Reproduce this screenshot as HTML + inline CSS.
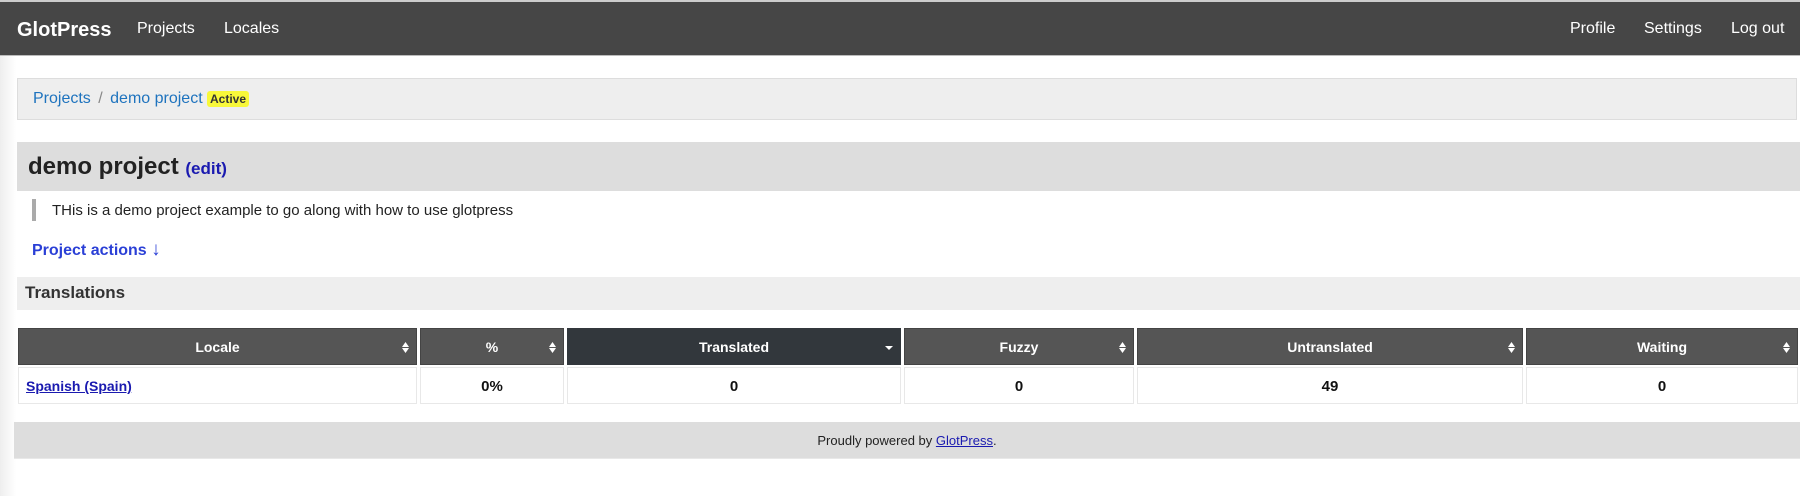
<!DOCTYPE html>
<html><head><meta charset="utf-8"><style>
*{margin:0;padding:0;box-sizing:border-box}
body{width:1800px;height:496px;background:#fff;font-family:"Liberation Sans",Arial,sans-serif;position:relative;overflow:hidden;color:#222}
.a{position:absolute}
#nav{left:0;top:0;width:1800px;height:56px;background:#464646;border-top:2px solid #ccc;border-bottom:1px solid #bbb}
#nav span{position:absolute;top:18px;color:#fff;font-size:16px}
#shadow{left:0;top:56px;width:16px;height:440px;background:linear-gradient(to right,#eee,#fff)}
.th{top:328px;height:37px;background:#555;color:#fff;font-weight:bold;font-size:14px;text-align:center;line-height:37px;border:1px solid #444}
.th svg{position:absolute;right:7px;top:13px}
.td{top:367px;height:37px;background:#fff;border:1px solid #e8e8e8;text-align:center;line-height:37px;font-weight:bold;font-size:15px;color:#111}
</style></head><body>
<div id="nav" class="a">
<span style="left:17px;top:17px;font-weight:bold;font-size:20px">GlotPress</span>
<span style="left:137px">Projects</span>
<span style="left:224px">Locales</span>
<span style="left:1570px">Profile</span>
<span style="left:1644px">Settings</span>
<span style="left:1731px">Log out</span>
</div>
<div id="shadow" class="a"></div>
<div class="a" style="left:17px;top:78px;width:1780px;height:42px;background:#eee;border:1px solid #ddd"></div>
<div class="a" style="left:33px;top:90px;font-size:16px;color:#1e73be">Projects <span style="color:#888;margin:0 3px">/</span> demo project</div>
<div class="a" style="left:207px;top:91px;background:#f8f83a;border-radius:3px;padding:1px 3px;font-size:12px;font-weight:bold;color:#333">Active</div>
<div class="a" style="left:17px;top:142px;width:1783px;height:49px;background:#ddd"></div>
<div class="a" style="left:28px;top:153px;font-size:24px;font-weight:bold;color:#222">demo project <span style="font-size:17px;color:#1a1ab0">(edit)</span></div>
<div class="a" style="left:32px;top:199px;width:4px;height:22px;background:#aaa"></div>
<div class="a" style="left:52px;top:202px;font-size:15px;color:#222">THis is a demo project example to go along with how to use glotpress</div>
<div class="a" style="left:32px;top:239px;font-size:16px;font-weight:bold;color:#2a3fd6">Project actions <span style="font-size:19px;font-weight:normal">↓</span></div>
<div class="a" style="left:17px;top:277px;width:1783px;height:33px;background:#eee"></div>
<div class="a" style="left:25px;top:283px;font-size:17px;font-weight:bold;color:#333">Translations</div>
<div class="a th" style="left:18px;width:399px">Locale<svg width="7" height="11" viewBox="0 0 7 11"><path d="M0 5L3.5 0L7 5ZM0 6L3.5 11L7 6Z" fill="#fff"/></svg></div>
<div class="a th" style="left:420px;width:144px">%<svg width="7" height="11" viewBox="0 0 7 11"><path d="M0 5L3.5 0L7 5ZM0 6L3.5 11L7 6Z" fill="#fff"/></svg></div>
<div class="a th" style="left:567px;width:334px;background:#32373c;border-color:#32373c">Translated<svg width="8" height="11" viewBox="0 0 8 11" style="top:14px"><path d="M0 3L4 7L8 3Z" fill="#fff"/></svg></div>
<div class="a th" style="left:904px;width:230px">Fuzzy<svg width="7" height="11" viewBox="0 0 7 11"><path d="M0 5L3.5 0L7 5ZM0 6L3.5 11L7 6Z" fill="#fff"/></svg></div>
<div class="a th" style="left:1137px;width:386px">Untranslated<svg width="7" height="11" viewBox="0 0 7 11"><path d="M0 5L3.5 0L7 5ZM0 6L3.5 11L7 6Z" fill="#fff"/></svg></div>
<div class="a th" style="left:1526px;width:272px">Waiting<svg width="7" height="11" viewBox="0 0 7 11"><path d="M0 5L3.5 0L7 5ZM0 6L3.5 11L7 6Z" fill="#fff"/></svg></div>
<div class="a td" style="left:18px;width:399px;text-align:left;padding-left:7px;font-size:14px"><span style="color:#1a1ab0;text-decoration:underline">Spanish (Spain)</span></div>
<div class="a td" style="left:420px;width:144px">0%</div>
<div class="a td" style="left:567px;width:334px">0</div>
<div class="a td" style="left:904px;width:230px">0</div>
<div class="a td" style="left:1137px;width:386px">49</div>
<div class="a td" style="left:1526px;width:272px">0</div>
<div class="a" style="left:14px;top:422px;width:1786px;height:37px;background:#ddd;border-bottom:1px solid #e8e8e8;text-align:center;line-height:37px;font-size:13px;color:#222">Proudly powered by <span style="color:#1a1ab0;text-decoration:underline">GlotPress</span>.</div>
</body></html>
